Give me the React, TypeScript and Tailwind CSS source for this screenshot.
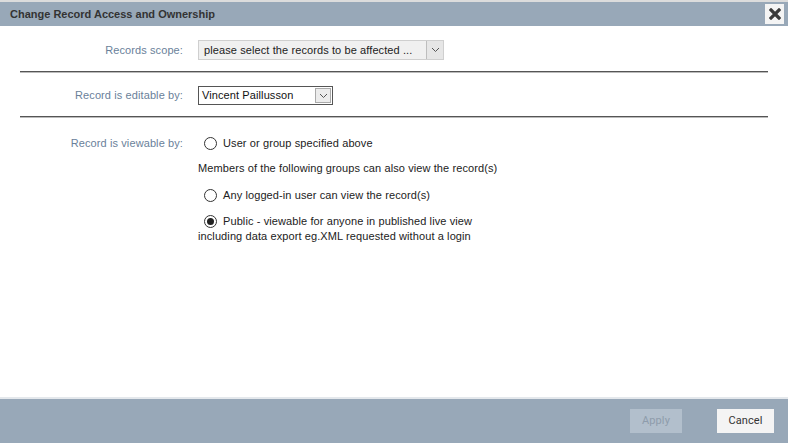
import React from 'react';

const Radio = ({ checked }: { checked?: boolean }) => (
  <span className="inline-flex h-[13px] w-[13px] shrink-0 items-center justify-center rounded-full border border-[#333] bg-white">
    {checked && <span className="h-[7px] w-[7px] rounded-full bg-[#222]" />}
  </span>
);

const Chevron = () => (
  <svg width="9" height="6" viewBox="0 0 9 6">
    <path d="M1 1 L4.5 4.5 L8 1" fill="none" stroke="#555" strokeWidth="1" />
  </svg>
);

export default function App() {
  return (
    <div className="flex h-[443px] w-[788px] flex-col bg-white text-[11px] tracking-[0.1px] text-[#222]" style={{ fontFamily: '"Liberation Sans", Arial, sans-serif' }}>
      {/* Header */}
      <div className="h-[2px] bg-[#dcdcdc]" />
      <div className="flex h-[24px] items-center justify-between bg-[#98a8b8] pl-[10px] pr-[4px]">
        <span className="text-[11px] font-bold tracking-normal text-[#333]">Change Record Access and Ownership</span>
        <button className="flex h-[20px] w-[19px] items-center justify-center bg-[#f4f4f4]">
          <svg width="12" height="12" viewBox="0 0 12 12">
            <path d="M2 2 L10 10 M10 2 L2 10" stroke="#3a3a3a" strokeWidth="3.2" strokeLinecap="square" />
          </svg>
        </button>
      </div>

      {/* Body */}
      <div className="flex-1 pt-[14px]">
        <div className="flex items-center">
          <div className="w-[183px] text-right text-[#6a7f9a]">Records scope:</div>
          <div className="ml-[15px] flex h-[20px] w-[246px] items-center border border-[#cfcfcf] bg-[#f0f0f0]">
            <span className="flex-1 pl-[5px] text-[#222]">please select the records to be affected ...</span>
            <span className="flex h-[18px] w-[17px] items-center justify-center border-l border-[#bdbdbd] bg-[#e6e6e6]">
              <Chevron />
            </span>
          </div>
        </div>

        <div className="mx-[20px] mt-[11px] h-[2px] border-b border-[#bbb] bg-[#555]" />

        <div className="mt-[13px] flex items-center">
          <div className="w-[183px] text-right text-[#6a7f9a]">Record is editable by:</div>
          <div className="ml-[15px] flex h-[19px] w-[135px] items-center border border-[#555] bg-white">
            <span className="flex-1 pl-[3px] text-[#111]">Vincent Paillusson</span>
            <span className="mr-[1px] flex h-[15px] w-[16px] items-center justify-center border border-[#aaa] bg-[#ececec]">
              <Chevron />
            </span>
          </div>
        </div>

        <div className="mx-[20px] mt-[11px] h-[2px] border-b border-[#bbb] bg-[#555]" />

        <div className="mt-[17px] flex items-center">
          <div className="w-[183px] text-right text-[#6a7f9a]">Record is viewable by:</div>
          <div className="ml-[21px] flex items-center gap-[6px]">
            <Radio />
            <span>User or group specified above</span>
          </div>
        </div>

        <div className="ml-[198px] mt-[8px]">Members of the following groups can also view the record(s)</div>

        <div className="ml-[204px] mt-[11px] flex items-center gap-[6px]">
          <Radio />
          <span>Any logged-in user can view the record(s)</span>
        </div>

        <div className="ml-[198px] mt-[10px] leading-[15px]">
          <div className="ml-[6px] flex items-center gap-[6px]">
            <Radio checked />
            <span>Public - viewable for anyone in published live view</span>
          </div>
          <div>including data export eg.XML requested without a login</div>
        </div>
      </div>

      {/* Footer */}
      <div className="flex h-[46px] items-center justify-end gap-[35px] border-t-2 border-[#e4e8ec] bg-[#98a8b8] pr-[14px]" style={{ fontFamily: 'Roboto, "Liberation Sans", sans-serif' }}>
        <button className="h-[24px] w-[52px] bg-[#b2bfcc] text-[11px] text-[#8e9cab]">Apply</button>
        <button className="h-[24px] w-[57px] bg-[#f4f4f4] text-[11px] text-[#333]">Cancel</button>
      </div>
    </div>
  );
}
